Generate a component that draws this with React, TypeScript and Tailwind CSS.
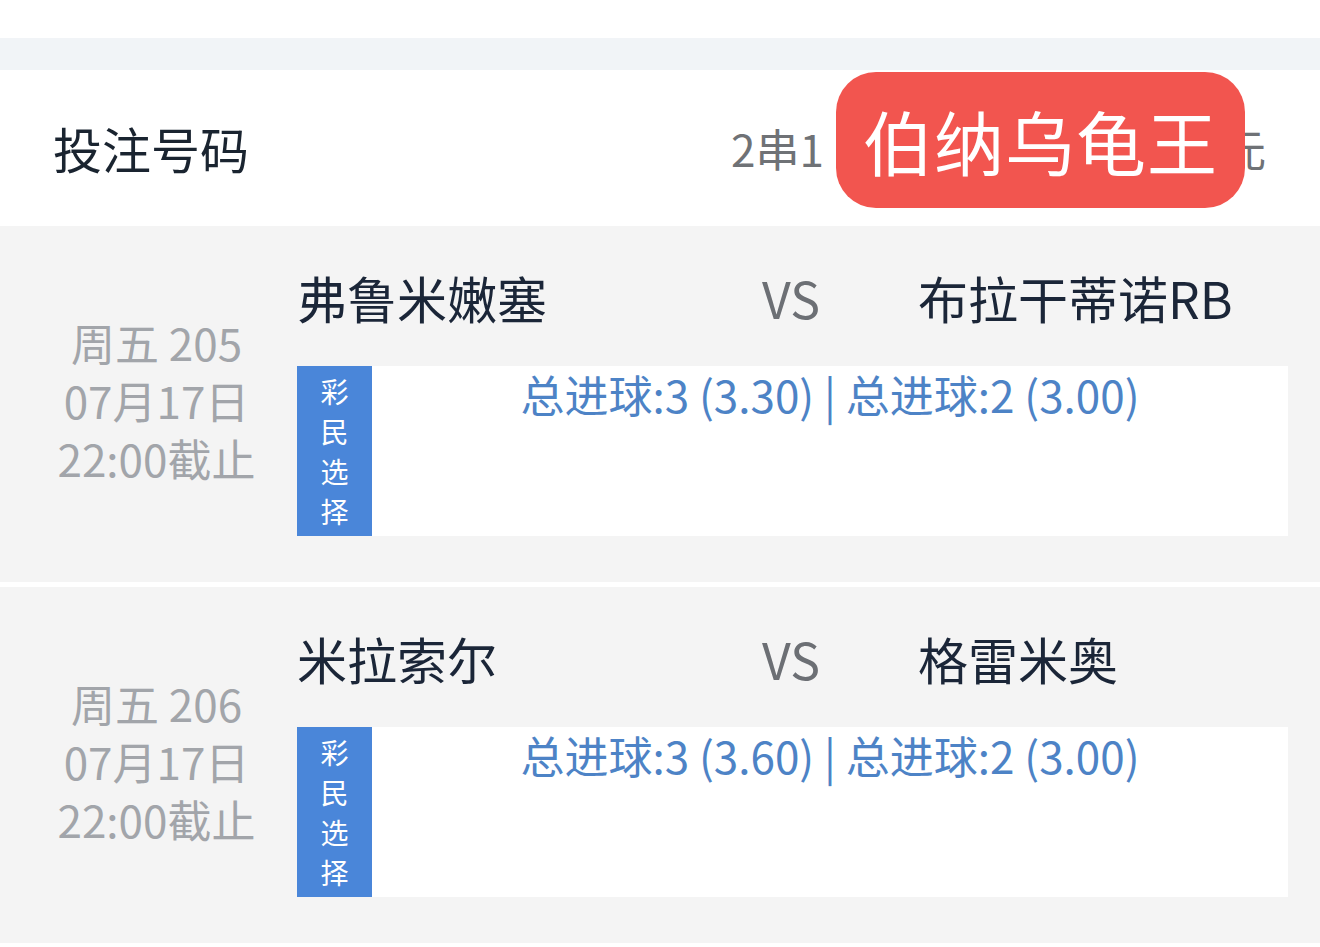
import { memo } from 'react';

interface MatchProps {
	week: string;
	date: string;
	deadline: string;
	home: string;
	away: string;
	pick: string;
}

const FONT = "font-['Noto_Sans_CJK_SC','Noto_Sans',sans-serif]";

const matches: MatchProps[] = [
	{
		week: '周五 205',
		date: '07月17日',
		deadline: '22:00截止',
		home: '弗鲁米嫩塞',
		away: '布拉干蒂诺RB',
		pick: '总进球:3 (3.30) | 总进球:2 (3.00)'
	},
	{
		week: '周五 206',
		date: '07月17日',
		deadline: '22:00截止',
		home: '米拉索尔',
		away: '格雷米奥',
		pick: '总进球:3 (3.60) | 总进球:2 (3.00)'
	}
];

const MatchRow = memo(({ week, date, deadline, home, away, pick }: MatchProps) => {
	return (
		<div className="flex items-center bg-[#f4f4f4] pt-[42px] pb-[46px]">
			<div className="w-[297px] pl-[16px] pb-[4px] flex flex-col items-center text-[44px] leading-[58px] text-[#a2a5aa]">
				<div>{week}</div>
				<div>{date}</div>
				<div>{deadline}</div>
			</div>
			<div className="flex-1 pr-[32px] flex flex-col gap-[34px]">
				<div className="flex items-center h-[64px] pb-[6px] text-[50px] leading-[58px]">
					<div className="w-[465px] text-[#1b2638]">{home}</div>
					<div className="w-[156px] text-[#6c6f74]">VS</div>
					<div className="flex-1 text-[#1b2638]">{away}</div>
				</div>
				<div className="flex h-[170px] bg-white">
					<div className="w-[75px] bg-[#4a86d9] flex flex-col items-center justify-center text-white text-[28px] leading-[40px]">
						<span>彩</span>
						<span>民</span>
						<span>选</span>
						<span>择</span>
					</div>
					<div className="flex-1 flex justify-center pt-[3px] text-[44px] leading-[50px] text-[#4d83c6]">{pick}</div>
				</div>
			</div>
		</div>
	);
});

export default function App() {
	return (
		<div className={`${FONT} w-[1320px] h-[947px] overflow-hidden bg-white`}>
			<div className="h-[38px] bg-white" />
			<div className="h-[32px] bg-[#f1f4f7]" />
			<div className="relative h-[156px] bg-white flex items-center pl-[53px]">
				<div className="text-[49px] text-[#1a2430]">投注号码</div>
				<div className="ml-auto mr-[54px] w-[535px] flex justify-between text-[44px] text-[#6f7276]">
					<span>2串1</span>
					<span>元</span>
				</div>
				<div className="absolute left-[836px] top-[2px] w-[409px] h-[136px] rounded-[40px] bg-[#f2554f] flex items-center justify-center text-white text-[70px] tracking-[1px]">
					伯纳乌龟王
				</div>
			</div>
			<MatchRow {...matches[0]} />
			<div className="h-[5px] bg-white" />
			<MatchRow {...matches[1]} />
		</div>
	);
}
